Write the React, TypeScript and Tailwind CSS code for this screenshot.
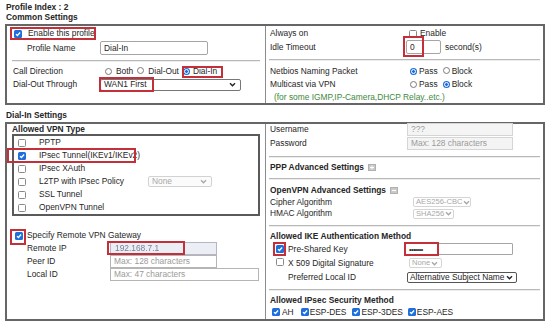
import React from "react";

function Cb({ on }: { on?: boolean }) {
  return on ? (
    <span className="inline-flex w-[8px] h-[8px] shrink-0 items-center justify-center rounded-[1.5px] bg-[#1d6fdc]">
      <svg width="6" height="6" viewBox="0 0 6 6">
        <path d="M1 3.1 2.4 4.5 5.1 1.5" fill="none" stroke="#fff" strokeWidth="1.3" />
      </svg>
    </span>
  ) : (
    <span className="inline-block w-[8px] h-[8px] shrink-0 rounded-[1.5px] border border-[#8a8a8a] bg-white" />
  );
}

function Rd({ on }: { on?: boolean }) {
  return on ? (
    <span className="inline-flex w-[7px] h-[7px] shrink-0 items-center justify-center rounded-full bg-[#1d6fdc]">
      <span className="w-[5px] h-[5px] rounded-full bg-[#1d6fdc] border border-white" />
    </span>
  ) : (
    <span className="inline-block w-[7px] h-[7px] shrink-0 rounded-full border border-[#7a7a7a] bg-white" />
  );
}

function Chev({ color }: { color: string }) {
  return (
    <svg width="7" height="5" viewBox="0 0 7 5" className="shrink-0">
      <path d="M1 1.2 3.5 3.7 6 1.2" fill="none" stroke={color} strokeWidth="1.4" />
    </svg>
  );
}

function Red({ className }: { className: string }) {
  return <span className={"absolute pointer-events-none border-2 border-[#c3303a] " + className} />;
}

function ExpIcon({ minus }: { minus?: boolean }) {
  return (
    <svg width="8" height="7" viewBox="0 0 8 7" className="shrink-0">
      <rect x="0.5" y="0.5" width="7" height="6" fill="#c9c9c9" stroke="#b0b0b0" />
      <path d="M2 3.5h4" stroke="#fff" strokeWidth="1" />
      {!minus && <path d="M4 1.5v4" stroke="#fff" strokeWidth="1" />}
    </svg>
  );
}

export default function App() {
  return (
    <div className="w-[554px] h-[328px] bg-white overflow-hidden whitespace-nowrap text-[8.4px] leading-none text-[#262626] [font-family:'Liberation_Sans',Arial,sans-serif]">
      <div className="pl-[6px] pt-[2px] font-bold leading-[10px]">Profile Index : 2</div>
      <div className="pl-[6px] font-bold leading-[10px]">Common Settings</div>

      {/* Common settings box */}
      <div className="ml-[5px] mt-[2px] w-[540px] h-[81px] border-2 border-[#666] flex">
        <div className="w-[259px] border-r border-[#8c8c8c] flex flex-col">
          <div className="relative mt-[1px] h-[13px] flex items-center pl-[7px]">
            <Cb on />
            <span className="ml-[6px]">Enable this profile</span>
            <Red className="left-[3px] top-0 w-[86px] h-[13px]" />
          </div>
          <div className="mt-[1px] h-[14px] flex items-center pl-[20px]">
            <span className="w-[73px]">Profile Name</span>
            <div className="w-[108px] h-[14px] border border-[#a5a5a5] rounded-[2px] flex items-center pl-[3px]">Dial-In</div>
          </div>
          <div className="mt-[5px] mx-[5px] h-[2px] border-t border-t-[#b8b8b8] border-b border-b-[#ededed]" />
          <div className="relative mt-[3px] h-[13px] flex items-center pl-[6px]">
            <span className="w-[92px]">Call Direction</span>
            <Rd />
            <span className="ml-[4px]">Both</span>
            <span className="ml-[4px]"><Rd /></span>
            <span className="ml-[4px]">Dial-Out</span>
            <span className="ml-[4px]"><Rd on /></span>
            <span className="ml-[3px]">Dial-In</span>
            <Red className="left-[175px] top-[1px] w-[41px] h-[12px]" />
          </div>
          <div className="relative h-[13px] flex items-center pl-[6px]">
            <span className="w-[87px]">Dial-Out Through</span>
            <div className="w-[141px] h-[12px] border border-[#777] rounded-[2px] flex items-center pl-[3px] pr-[4px]">
              <span>WAN1 First</span>
              <span className="ml-auto"><Chev color="#222" /></span>
            </div>
            <Red className="left-[92px] -top-[1px] w-[55px] h-[15px]" />
          </div>
        </div>

        <div className="flex-1 flex flex-col pl-[4px]">
          <div className="mt-[1px] h-[13px] flex items-center">
            <span className="w-[139px]">Always on</span>
            <Cb />
            <span className="ml-[3px]">Enable</span>
          </div>
          <div className="relative h-[14px] flex items-center">
            <span className="w-[136px]">Idle Timeout</span>
            <div className="w-[35px] h-[14px] border border-[#a5a5a5] rounded-[2px] flex items-center pl-[3px]">0</div>
            <span className="ml-[4px]">second(s)</span>
            <Red className="left-[133px] -top-[4px] w-[21px] h-[21px]" />
          </div>
          <div className="mt-[5px] mr-[3px] -ml-[1px] h-[2px] border-t border-t-[#b8b8b8] border-b border-b-[#ededed]" />
          <div className="mt-[4px] h-[13px] flex items-center">
            <span className="w-[140px]">Netbios Naming Packet</span>
            <Rd on />
            <span className="ml-[2px]">Pass</span>
            <span className="ml-[5px]"><Rd /></span>
            <span className="ml-[2px]">Block</span>
          </div>
          <div className="h-[13px] flex items-center">
            <span className="w-[140px]">Multicast via VPN</span>
            <Rd />
            <span className="ml-[2px]">Pass</span>
            <span className="ml-[5px]"><Rd on /></span>
            <span className="ml-[2px]">Block</span>
          </div>
          <div className="h-[12px] flex items-center pl-[4px] text-[#3d8a3d]">(for some IGMP,IP-Camera,DHCP Relay..etc.)</div>
        </div>
      </div>

      <div className="pl-[6px] mt-[5px] font-bold leading-[10px]">Dial-In Settings</div>

      {/* Dial-in box */}
      <div className="ml-[5px] mt-[2px] w-[540px] h-[199px] border-2 border-[#666] flex">
        <div className="w-[259px] border-r border-[#8c8c8c] flex flex-col">
          <div className="h-[10px] flex items-center pl-[5px] font-bold">Allowed VPN Type</div>
          <div className="ml-[5px] w-[248px] h-[82px] border-2 border-[#5a5a5a] flex flex-col">
            <div className="h-[13px] flex items-center pl-[4px]">
              <Cb />
              <span className="ml-[13px]">PPTP</span>
            </div>
            <div className="relative h-[13px] flex items-center pl-[4px]">
              <Cb on />
              <span className="ml-[13px]">IPsec Tunnel(IKEv1/IKEv2)</span>
              <Red className="-left-[7px] -top-[1px] w-[129px] h-[15px]" />
            </div>
            <div className="h-[13px] flex items-center pl-[4px]">
              <Cb />
              <span className="ml-[13px]">IPsec XAuth</span>
            </div>
            <div className="h-[13px] flex items-center pl-[4px]">
              <Cb />
              <span className="ml-[13px] w-[109px]">L2TP with IPsec Policy</span>
              <div className="w-[64px] h-[11px] border border-[#d2d2d2] rounded-[2px] flex items-center pl-[3px] pr-[4px] text-[#a8a8a8] bg-[#fbfbfb]">
                <span>None</span>
                <span className="ml-auto"><Chev color="#a8a8a8" /></span>
              </div>
            </div>
            <div className="h-[13px] flex items-center pl-[4px]">
              <Cb />
              <span className="ml-[13px]">SSL Tunnel</span>
            </div>
            <div className="h-[13px] flex items-center pl-[4px]">
              <Cb />
              <span className="ml-[13px]">OpenVPN Tunnel</span>
            </div>
          </div>

          <div className="relative mt-[13px] h-[13px] flex items-center pl-[8px]">
            <Cb on />
            <span className="ml-[4px]">Specify Remote VPN Gateway</span>
            <Red className="left-[3px] top-0 w-[16px] h-[16px]" />
          </div>
          <div className="relative h-[13px] flex items-center pl-[20px]">
            <span className="w-[83px]">Remote IP</span>
            <div className="w-[107px] h-[13px] border border-[#b5b5c5] bg-[#eceef6] flex items-center pl-[4px]">
              <span className="blur-[0.7px] text-[#7a7f95]">192.168.7.1</span>
            </div>
            <Red className="left-[100px] -top-[1px] w-[78px] h-[14px]" />
          </div>
          <div className="h-[13px] flex items-center pl-[20px]">
            <span className="w-[83px]">Peer ID</span>
            <div className="w-[107px] h-[13px] border border-[#b5b5b5] flex items-center pl-[3px] text-[#9a9a9a]">Max: 128 characters</div>
          </div>
          <div className="h-[13px] flex items-center pl-[20px]">
            <span className="w-[83px]">Local ID</span>
            <div className="w-[149px] h-[13px] border border-[#b5b5b5] flex items-center pl-[3px] text-[#9a9a9a]">Max: 47 characters</div>
          </div>
        </div>

        <div className="flex-1 flex flex-col pl-[4px]">
          <div className="-mt-[2px] h-[14px] flex items-center">
            <span className="w-[137px]">Username</span>
            <div className="w-[106px] h-[13px] border border-[#d5d5d5] bg-[#f4f4f4] flex items-center pl-[3px] text-[#9a9a9a]">???</div>
          </div>
          <div className="h-[14px] flex items-center">
            <span className="w-[137px]">Password</span>
            <div className="w-[106px] h-[13px] border border-[#d5d5d5] bg-[#f4f4f4] flex items-center pl-[3px] text-[#9a9a9a]">Max: 128 characters</div>
          </div>
          <div className="mt-[6px] mr-[3px] -ml-[1px] h-[2px] border-t border-t-[#b8b8b8] border-b border-b-[#ededed]" />
          <div className="mt-[2px] h-[14px] flex items-center font-bold">
            <span>PPP Advanced Settings</span>
            <span className="ml-[4px]"><ExpIcon /></span>
          </div>
          <div className="mt-[4px] mr-[3px] -ml-[1px] h-[2px] border-t border-t-[#b8b8b8] border-b border-b-[#ededed]" />
          <div className="mt-[4px] h-[12px] flex items-center font-bold">
            <span>OpenVPN Advanced Settings</span>
            <span className="ml-[4px]"><ExpIcon minus /></span>
          </div>
          <div className="h-[12px] flex items-center">
            <span className="w-[143px]">Cipher Algorithm</span>
            <div className="w-[58px] h-[10px] border border-[#d5d5d5] rounded-[2px] flex items-center gap-[1px] pl-[2px] pr-[3px] text-[7.6px] text-[#a8a8a8]">
              <span>AES256-CBC</span>
              <span className="ml-auto"><Chev color="#a8a8a8" /></span>
            </div>
          </div>
          <div className="h-[11px] flex items-center">
            <span className="w-[143px]">HMAC Algorithm</span>
            <div className="w-[41px] h-[10px] border border-[#d5d5d5] rounded-[2px] flex items-center gap-[1px] pl-[2px] pr-[3px] text-[7.6px] text-[#a8a8a8]">
              <span>SHA256</span>
              <span className="ml-auto"><Chev color="#a8a8a8" /></span>
            </div>
          </div>
          <div className="mt-[6px] mr-[3px] -ml-[1px] h-[2px] border-t border-t-[#b8b8b8] border-b border-b-[#ededed]" />
          <div className="mt-[3px] h-[12px] flex items-center font-bold">Allowed IKE Authentication Method</div>
          <div className="relative h-[14px] flex items-center">
            <span className="ml-[6px]"><Cb on /></span>
            <span className="ml-[4px] w-[116px]">Pre-Shared Key</span>
            <div className="w-[109px] h-[12px] border border-[#a5a5a5] rounded-[1px] flex items-center pl-[4px] text-[#222] text-[7px] tracking-[-0.5px]">•••••••</div>
            <Red className="left-[3px] top-0 w-[13px] h-[14px]" />
            <Red className="left-[134px] top-0 w-[35px] h-[14px]" />
          </div>
          <div className="h-[14px] flex items-center">
            <span className="ml-[6px]"><Cb /></span>
            <span className="ml-[4px] w-[121px]">X 509 Digital Signature</span>
            <div className="w-[33px] h-[10px] border border-[#d5d5d5] rounded-[2px] flex items-center gap-[1px] pl-[2px] pr-[3px] text-[7.6px] text-[#a8a8a8]">
              <span>None</span>
              <span className="ml-auto"><Chev color="#a8a8a8" /></span>
            </div>
          </div>
          <div className="h-[14px] flex items-center">
            <span className="ml-[18px] w-[119px]">Preferred Local ID</span>
            <div className="w-[110px] h-[11px] border border-[#555] rounded-[2px] flex items-center pl-[2px] pr-[3px]">
              <span>Alternative Subject Name</span>
              <span className="ml-auto"><Chev color="#222" /></span>
            </div>
          </div>
          <div className="mt-[5px] mr-[3px] -ml-[1px] h-[2px] border-t border-t-[#b8b8b8] border-b border-b-[#ededed]" />
          <div className="mt-[3px] h-[12px] flex items-center font-bold">Allowed IPsec Security Method</div>
          <div className="h-[12px] flex items-center">
            <span className="ml-[2px]"><Cb on /></span>
            <span className="ml-[2px]">AH</span>
            <span className="ml-[7px]"><Cb on /></span>
            <span className="ml-[1px]">ESP-DES</span>
            <span className="ml-[6px]"><Cb on /></span>
            <span className="ml-[1px]">ESP-3DES</span>
            <span className="ml-[5px]"><Cb on /></span>
            <span className="ml-[1px]">ESP-AES</span>
          </div>
        </div>
      </div>
    </div>
  );
}
